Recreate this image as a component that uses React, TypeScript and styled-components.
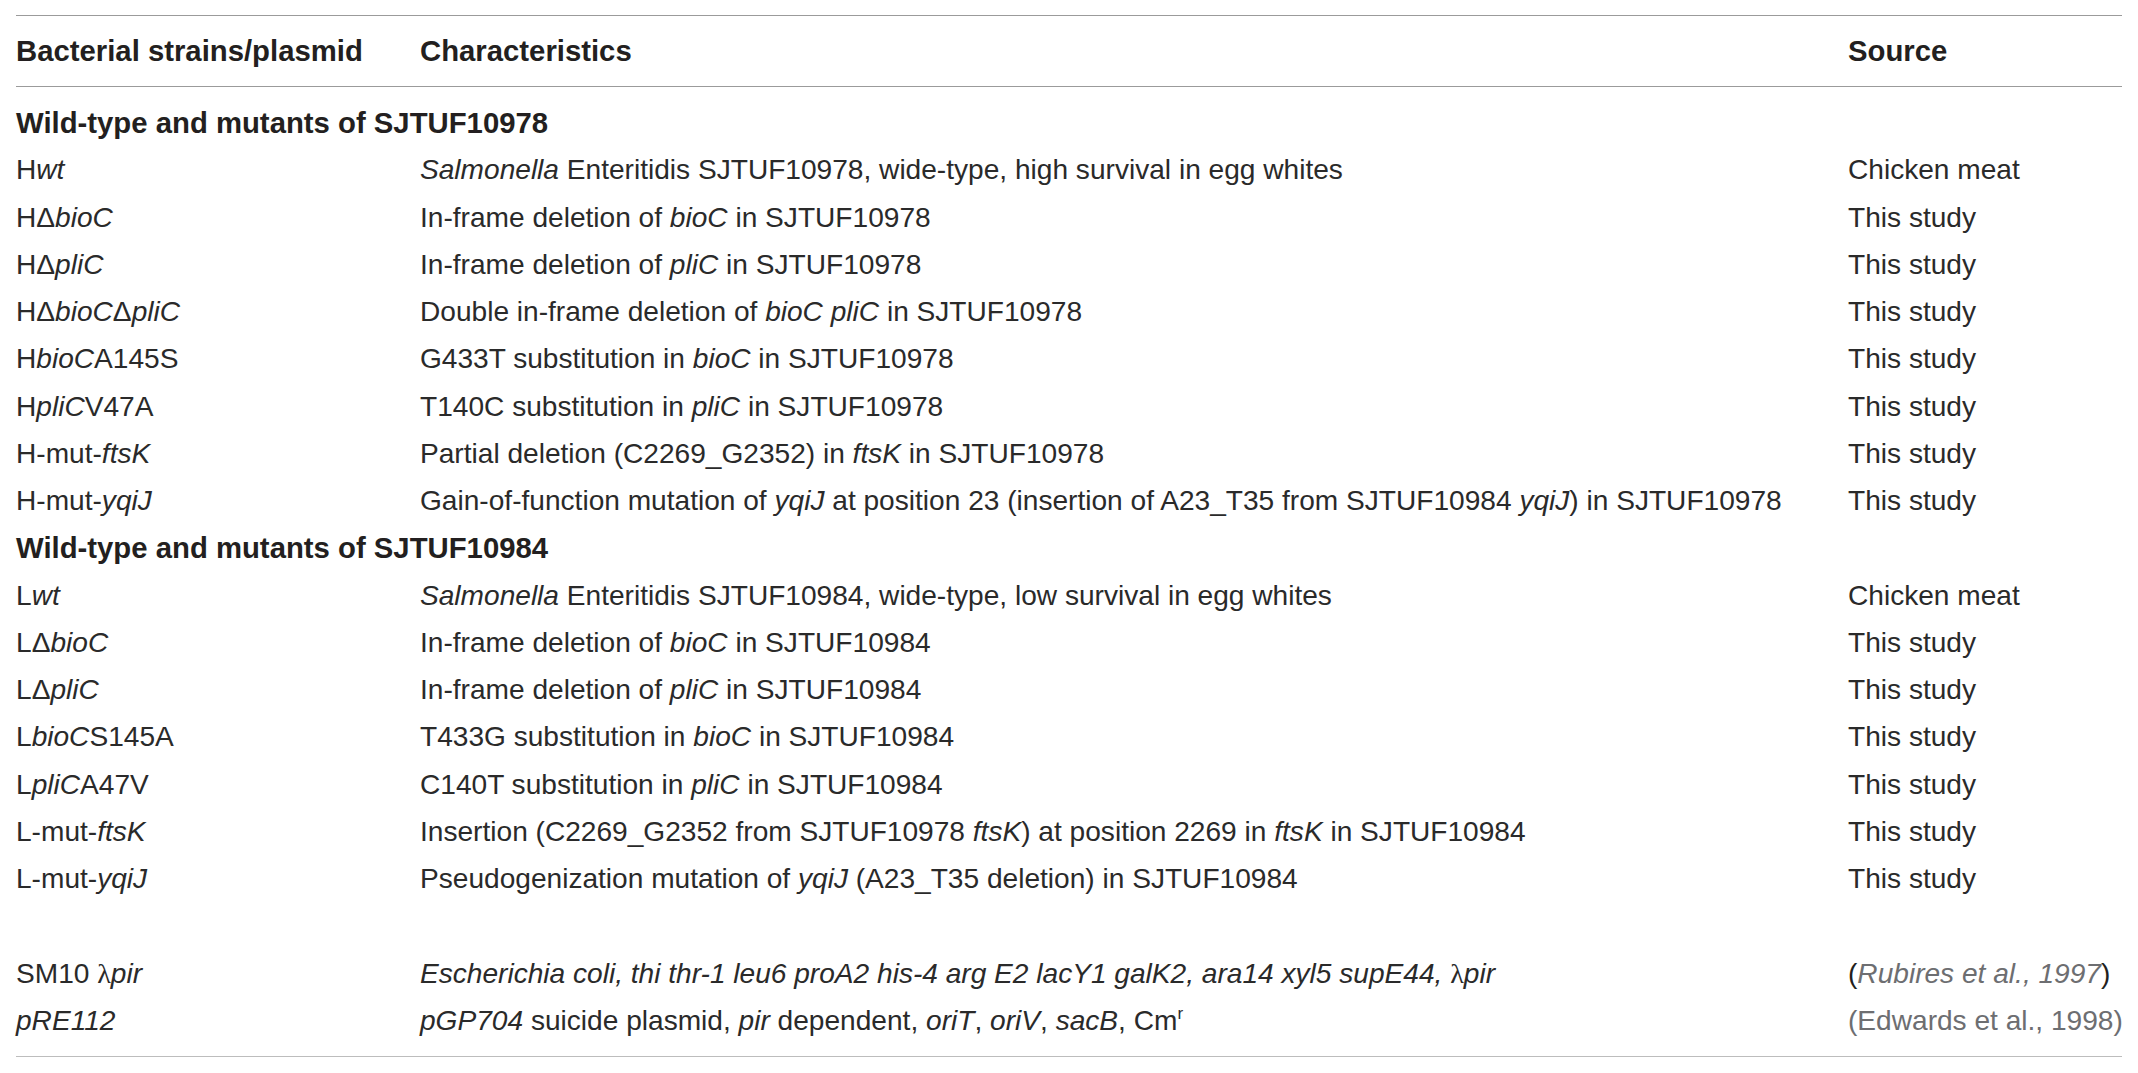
import React from "react";
import styled, { createGlobalStyle } from "styled-components";

const GlobalStyle = createGlobalStyle`
  html, body {
    margin: 0;
    padding: 0;
    background: #ffffff;
  }
  body {
    font-family: "Liberation Sans", Arial, Helvetica, sans-serif;
    color: #231f20;
  }
`;

const Page = styled.div`
  padding: 15px 16px 0 16px;
  width: 2106px;
`;

const Table = styled.div`
  width: 2106px;
  border-top: 1px solid #9b9b9b;
  border-bottom: 1px solid #bdbdbd;
`;

const Columns = `
  display: grid;
  grid-template-columns: 404px 1428px 1fr;
`;

const HeaderRow = styled.div`
  ${Columns}
  padding: 19px 0;
  line-height: 32px;
  font-size: 29.3px;
  font-weight: 700;
  color: #231f20;
  border-bottom: 1px solid #9b9b9b;
`;

const Body = styled.div`
  padding: 12px 0;
`;

const Row = styled.div`
  ${Columns}
  height: 47.25px;
  line-height: 47.25px;
  font-size: 28.1px;
  color: #2a2a2a;
  white-space: nowrap;
`;

const SectionRow = styled.div`
  height: 47.25px;
  line-height: 47.25px;
  font-size: 29.3px;
  font-weight: 700;
  color: #231f20;
  white-space: nowrap;
`;

const Cell = styled.div`
  white-space: nowrap;
  overflow: visible;
`;

const I = styled.i`
  font-style: italic;
`;

const Lambda = styled.span`
  font-family: "Liberation Serif", "DejaVu Serif", serif;
`;

const Sup = styled.sup`
  font-size: 17px;
  line-height: 0;
  vertical-align: 11px;
`;

const Cite = styled.span<{ $italic?: boolean }>`
  color: #6d6e71;
  font-style: ${(p) => (p.$italic ? "italic" : "normal")};
`;

const Paren = styled.span`
  color: #231f20;
`;

type RowData = {
  kind?: "row";
  strain: React.ReactNode;
  desc: React.ReactNode;
  source: React.ReactNode;
};
type SectionData = { kind: "section"; title: string };
type EmptyData = { kind: "empty" };
type Item = RowData | SectionData | EmptyData;

const D = "\u0394";

const items: Item[] = [
  { kind: "section", title: "Wild-type and mutants of SJTUF10978" },
  {
    strain: <>H<I>wt</I></>,
    desc: <><I>Salmonella</I> Enteritidis SJTUF10978, wide-type, high survival in egg whites</>,
    source: "Chicken meat",
  },
  {
    strain: <>H{D}<I>bioC</I></>,
    desc: <>In-frame deletion of <I>bioC</I> in SJTUF10978</>,
    source: "This study",
  },
  {
    strain: <>H{D}<I>pliC</I></>,
    desc: <>In-frame deletion of <I>pliC</I> in SJTUF10978</>,
    source: "This study",
  },
  {
    strain: <>H{D}<I>bioC</I>{D}<I>pliC</I></>,
    desc: <>Double in-frame deletion of <I>bioC pliC</I> in SJTUF10978</>,
    source: "This study",
  },
  {
    strain: <>H<I>bioC</I>A145S</>,
    desc: <>G433T substitution in <I>bioC</I> in SJTUF10978</>,
    source: "This study",
  },
  {
    strain: <>H<I>pliC</I>V47A</>,
    desc: <>T140C substitution in <I>pliC</I> in SJTUF10978</>,
    source: "This study",
  },
  {
    strain: <>H-mut-<I>ftsK</I></>,
    desc: <>Partial deletion (C2269_G2352) in <I>ftsK</I> in SJTUF10978</>,
    source: "This study",
  },
  {
    strain: <>H-mut-<I>yqiJ</I></>,
    desc: (
      <>
        Gain-of-function mutation of <I>yqiJ</I> at position 23 (insertion of A23_T35 from SJTUF10984{" "}
        <I>yqiJ</I>) in SJTUF10978
      </>
    ),
    source: "This study",
  },
  { kind: "section", title: "Wild-type and mutants of SJTUF10984" },
  {
    strain: <>L<I>wt</I></>,
    desc: <><I>Salmonella</I> Enteritidis SJTUF10984, wide-type, low survival in egg whites</>,
    source: "Chicken meat",
  },
  {
    strain: <>L{D}<I>bioC</I></>,
    desc: <>In-frame deletion of <I>bioC</I> in SJTUF10984</>,
    source: "This study",
  },
  {
    strain: <>L{D}<I>pliC</I></>,
    desc: <>In-frame deletion of <I>pliC</I> in SJTUF10984</>,
    source: "This study",
  },
  {
    strain: <>L<I>bioC</I>S145A</>,
    desc: <>T433G substitution in <I>bioC</I> in SJTUF10984</>,
    source: "This study",
  },
  {
    strain: <>L<I>pliC</I>A47V</>,
    desc: <>C140T substitution in <I>pliC</I> in SJTUF10984</>,
    source: "This study",
  },
  {
    strain: <>L-mut-<I>ftsK</I></>,
    desc: <>Insertion (C2269_G2352 from SJTUF10978 <I>ftsK</I>) at position 2269 in <I>ftsK</I> in SJTUF10984</>,
    source: "This study",
  },
  {
    strain: <>L-mut-<I>yqiJ</I></>,
    desc: <>Pseudogenization mutation of <I>yqiJ</I> (A23_T35 deletion) in SJTUF10984</>,
    source: "This study",
  },
  { kind: "empty" },
  {
    strain: <>SM10 <Lambda>λ</Lambda><I>pir</I></>,
    desc: (
      <>
        <I>Escherichia coli, thi thr-1 leu6 proA2 his-4 arg E2 lacY1 galK2, ara14 xyl5 supE44, </I>
        <Lambda>λ</Lambda>
        <I>pir</I>
      </>
    ),
    source: (
      <>
        <Paren>(</Paren>
        <Cite $italic>Rubires et al., 1997</Cite>
        <Paren>)</Paren>
      </>
    ),
  },
  {
    strain: <I>pRE112</I>,
    desc: (
      <>
        <I>pGP704</I> suicide plasmid, <I>pir</I> dependent, <I>oriT</I>, <I>oriV</I>, <I>sacB</I>, Cm<Sup>r</Sup>
      </>
    ),
    source: <Cite>(Edwards et al., 1998)</Cite>,
  },
];

export default function App() {
  return (
    <>
      <GlobalStyle />
      <Page>
        <Table>
          <HeaderRow>
            <Cell>Bacterial strains/plasmid</Cell>
            <Cell>Characteristics</Cell>
            <Cell>Source</Cell>
          </HeaderRow>
          <Body>
            {items.map((it, i) => {
              if (it.kind === "section") {
                return <SectionRow key={i}>{it.title}</SectionRow>;
              }
              if (it.kind === "empty") {
                return <Row key={i} />;
              }
              return (
                <Row key={i}>
                  <Cell>{it.strain}</Cell>
                  <Cell>{it.desc}</Cell>
                  <Cell>{it.source}</Cell>
                </Row>
              );
            })}
          </Body>
        </Table>
      </Page>
    </>
  );
}
